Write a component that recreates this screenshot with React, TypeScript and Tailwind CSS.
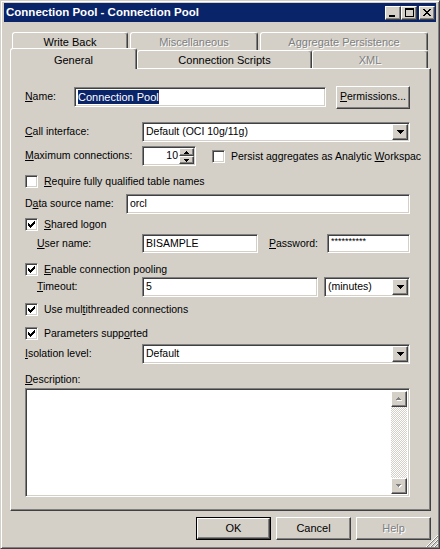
import React from "react";

const sunken =
  "border border-t-[#808080] border-l-[#808080] border-b-white border-r-white shadow-[inset_1px_1px_0_#404040,inset_-1px_-1px_0_#d4d0c8]";
const raised =
  "border border-t-white border-l-white border-b-[#404040] border-r-[#404040] shadow-[inset_-1px_-1px_0_#808080] bg-[#d4d0c8]";

const CHECK = ["......X", ".....XX", "X...XXX", "XX.XXX.", "XXXXX..", ".XXX...", "..X...."];
const DOWN = ["XXXXXXX", ".XXXXX.", "..XXX..", "...X..."];
const SPIN_UP = ["..X..", ".XXX.", "XXXXX"];
const SPIN_DOWN = ["XXXXX", ".XXX.", "..X.."];
const CLOSE = ["XX....XX", ".XX..XX.", "..XXXX..", "...XX...", "..XXXX..", ".XX..XX.", "XX....XX"];

function Pixels({ rows, color = "#000", shadow }: { rows: string[]; color?: string; shadow?: string }) {
  const w = rows[0].length;
  const h = rows.length;
  const cells: { x: number; y: number }[] = [];
  rows.forEach((r, y) => r.split("").forEach((c, x) => c === "X" && cells.push({ x, y })));
  return (
    <svg width={w + (shadow ? 1 : 0)} height={h + (shadow ? 1 : 0)} shapeRendering="crispEdges" className="block">
      {shadow && cells.map((c, i) => <rect key={"s" + i} x={c.x + 1} y={c.y + 1} width={1} height={1} fill={shadow} />)}
      {cells.map((c, i) => (
        <rect key={i} x={c.x} y={c.y} width={1} height={1} fill={color} />
      ))}
    </svg>
  );
}

function Checkbox({ checked, children }: { checked?: boolean; children: React.ReactNode }) {
  return (
    <div className="flex h-[13px] items-center">
      <div className={`${sunken} flex h-[13px] w-[13px] shrink-0 items-center justify-center bg-white`}>
        {checked && <Pixels rows={CHECK} />}
      </div>
      <span className="ml-[6px] whitespace-nowrap leading-[13px]">{children}</span>
    </div>
  );
}

function Field({ w, h = 20, children }: { w: number; h?: number; children?: React.ReactNode }) {
  return (
    <div
      className={`${sunken} flex items-center overflow-hidden bg-white pl-[3px] whitespace-nowrap`}
      style={{ width: w, height: h }}
    >
      {children}
    </div>
  );
}

function Select({ w, value }: { w: number; value: string }) {
  return (
    <div className={`${sunken} flex h-[20px] items-center bg-white pl-[3px] pr-[1px]`} style={{ width: w }}>
      <span className="flex-1 whitespace-nowrap">{value}</span>
      <div className={`${raised} flex h-[16px] w-[16px] items-center justify-center`}>
        <Pixels rows={DOWN} />
      </div>
    </div>
  );
}

function Button({ w, children, def, disabled }: { w: number; children: React.ReactNode; def?: boolean; disabled?: boolean }) {
  return (
    <div className={`h-[23px] ${def ? "border border-black" : ""}`} style={{ width: w }}>
      <div
        className={`${raised} flex h-full w-full items-center justify-center ${
          disabled ? "text-[#808080] [text-shadow:1px_1px_0_#fff]" : ""
        }`}
      >
        {children}
      </div>
    </div>
  );
}

function Tab({ w, children, disabled, h }: { w: number; children: React.ReactNode; disabled?: boolean; h: number }) {
  return (
    <div
      className={`flex items-start justify-center rounded-t-[3px] border-t border-l border-r border-t-white border-l-white border-r-[#404040] bg-[#d4d0c8] pt-[1px] shadow-[inset_-1px_0_0_#808080] ${
        disabled ? "text-[#808080] [text-shadow:1px_1px_0_#fff]" : ""
      }`}
      style={{ width: w, height: h }}
    >
      {children}
    </div>
  );
}

function TitleButton({ children, className = "" }: { children: React.ReactNode; className?: string }) {
  return <div className={`${raised} flex h-[14px] w-[16px] ${className}`}>{children}</div>;
}

export default function App() {
  return (
    <div className="relative h-[549px] w-[440px] border border-t-[#d4d0c8] border-l-[#d4d0c8] border-b-[#404040] border-r-[#404040] bg-[#d4d0c8] px-[3px] pt-[2px] font-['Liberation_Sans',Arial,sans-serif] text-[10.5px] text-black shadow-[inset_1px_1px_0_#fff,inset_-1px_-1px_0_#808080]">
      {/* title bar */}
      <div className="flex h-[19px] items-center bg-[#0a246a] pl-[2px] pr-[1px]">
        <span className="flex-1 whitespace-nowrap text-[11.5px] font-bold text-white">
          Connection Pool - Connection Pool
        </span>
        <TitleButton className="items-end pb-[2px] pl-[3px]">
          <div className="h-[2px] w-[6px] bg-black" />
        </TitleButton>
        <TitleButton className="items-center justify-center">
          <div className="h-[9px] w-[9px] border border-t-2 border-black" />
        </TitleButton>
        <TitleButton className="ml-[2px] items-center justify-center">
          <Pixels rows={CLOSE} />
        </TitleButton>
      </div>

      {/* back tab row */}
      <div className="ml-[8px] mt-[10px] flex h-[18px] gap-[2px] text-[11px]">
        <Tab w={116} h={18}>Write Back</Tab>
        <Tab w={128} h={18} disabled>
          Miscellaneous
        </Tab>
        <Tab w={168} h={18} disabled>
          Aggregate Persistence
        </Tab>
      </div>

      {/* front tab row */}
      <div className="ml-[6px] flex h-[18px] items-end text-[11px]">
        <div className="relative z-10 -mb-[1px] flex h-[21px] w-[127px] items-start justify-center rounded-t-[3px] border-t border-l border-r border-t-white border-l-white border-r-[#404040] bg-[#d4d0c8] pt-[3px] shadow-[inset_-1px_0_0_#808080]">
          General
        </div>
        <Tab w={175} h={18}>Connection Scripts</Tab>
        <Tab w={116} h={18} disabled>
          XML
        </Tab>
      </div>

      {/* panel */}
      <div className="ml-[6px] flex h-[443px] w-[421px] flex-col border border-t-white border-l-white border-b-[#404040] border-r-[#404040] pl-[14px] shadow-[inset_-1px_-1px_0_#808080]">
        <div className="mt-[17px] flex h-[22px] items-center">
          <span className="w-[49px]">
            <u className="underline">N</u>ame:
          </span>
          <Field w={252}>
            <span className="bg-[#0a246a] text-[11px] leading-[14px] text-white">Connection Pool</span>
          </Field>
          <div className="ml-[10px]">
            <Button w={74}>
              <span>
                <u className="underline">P</u>ermissions...
              </span>
            </Button>
          </div>
        </div>

        <div className="mt-[14px] flex h-[20px] items-center">
          <span className="w-[117px]">
            <u className="underline">C</u>all interface:
          </span>
          <Select w={268} value="Default (OCI 10g/11g)" />
        </div>

        <div className="mt-[4px] flex h-[20px] items-center">
          <span className="w-[117px]">
            <u className="underline">M</u>aximum connections:
          </span>
          <div className={`${sunken} flex h-[20px] w-[54px] items-center bg-white pr-[1px]`}>
            <span className="flex-1 pr-[1px] text-right">10</span>
            <div className="flex h-[16px] w-[15px] flex-col">
              <div className={`${raised} flex h-[8px] items-center justify-center`}>
                <Pixels rows={SPIN_UP} />
              </div>
              <div className={`${raised} flex h-[8px] items-center justify-center`}>
                <Pixels rows={SPIN_DOWN} />
              </div>
            </div>
          </div>
          <div className="ml-[16px] w-[209px] overflow-hidden">
            <Checkbox>
              Persist aggregates as Analytic <u className="underline">W</u>orkspace
            </Checkbox>
          </div>
        </div>

        <div className="mt-[9px]">
          <Checkbox>
            <u className="underline">R</u>equire fully qualified table names
          </Checkbox>
        </div>

        <div className="mt-[6px] flex h-[20px] items-center">
          <span className="w-[101px]">
            D<u className="underline">a</u>ta source name:
          </span>
          <Field w={284}>orcl</Field>
        </div>

        <div className="mt-[4px]">
          <Checkbox checked>
            <u className="underline">S</u>hared logon
          </Checkbox>
        </div>

        <div className="mt-[3px] flex h-[19px] items-center pl-[12px]">
          <span className="w-[105px]">
            <u className="underline">U</u>ser name:
          </span>
          <Field w={116} h={19}>
            BISAMPLE
          </Field>
          <span className="ml-[11px] w-[58px]">
            <u className="underline">P</u>assword:
          </span>
          <Field w={83} h={19}>
            <span className="self-start pt-[2px] text-[9px] leading-[9px]">**********</span>
          </Field>
        </div>

        <div className="mt-[10px]">
          <Checkbox checked>
            <u className="underline">E</u>nable connection pooling
          </Checkbox>
        </div>

        <div className="mt-[1px] flex h-[20px] items-center pl-[12px]">
          <span className="w-[105px]">
            <u className="underline">T</u>imeout:
          </span>
          <Field w={176}>5</Field>
          <div className="ml-[6px]">
            <Select w={86} value="(minutes)" />
          </div>
        </div>

        <div className="mt-[6px]">
          <Checkbox checked>
            Use mul<u className="underline">t</u>ithreaded connections
          </Checkbox>
        </div>

        <div className="mt-[11px]">
          <Checkbox checked>
            Parameters supp<u className="underline">o</u>rted
          </Checkbox>
        </div>

        <div className="mt-[4px] flex h-[20px] items-center">
          <span className="w-[117px]">
            <u className="underline">I</u>solation level:
          </span>
          <Select w={268} value="Default" />
        </div>

        <div className="mt-[9px] h-[13px] leading-[13px]">
          <u className="underline">D</u>escription:
        </div>

        <div className={`${sunken} mt-[2px] flex h-[109px] w-[385px] justify-end bg-white p-[2px]`}>
          <div className="flex w-[16px] flex-col">
            <div className={`${raised} flex h-[16px] items-center justify-center`}>
              <Pixels rows={SPIN_UP} color="#808080" shadow="#fff" />
            </div>
            <div className="flex-1 [background-image:repeating-conic-gradient(#d4d0c8_0_25%,#ffffff_0_50%)] [background-size:2px_2px]" />
            <div className={`${raised} flex h-[16px] items-center justify-center`}>
              <Pixels rows={SPIN_DOWN} color="#808080" shadow="#fff" />
            </div>
          </div>
        </div>
      </div>

      {/* dialog buttons */}
      <div className="mt-[6px] flex justify-end gap-[5px] pr-[5px] text-[11px]">
        <Button w={75} def>
          OK
        </Button>
        <Button w={75}>Cancel</Button>
        <Button w={75} disabled>
          Help
        </Button>
      </div>

      {/* size grip */}
      <svg width="12" height="12" shapeRendering="crispEdges" className="absolute bottom-[1px] right-[1px]">
        {[0, 4, 8].map((o) => (
          <g key={o}>
            <line x1={o} y1={12} x2={12} y2={o} stroke="#fff" strokeWidth={1} />
            <line x1={o + 1} y1={12} x2={12} y2={o + 1} stroke="#808080" strokeWidth={1.4} />
          </g>
        ))}
      </svg>
    </div>
  );
}
